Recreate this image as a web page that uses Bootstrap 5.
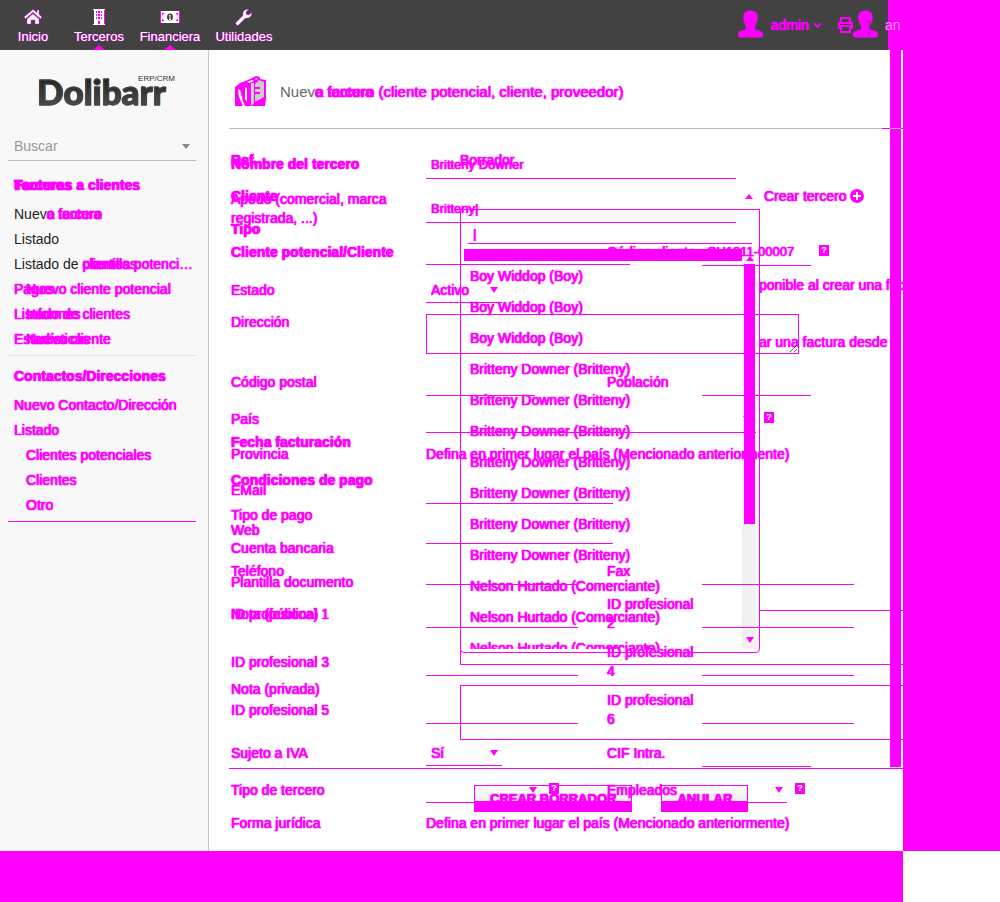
<!DOCTYPE html>
<html lang="es">
<head>
<meta charset="utf-8">
<meta name="viewport" content="width=device-width, initial-scale=1">
<title>Dolibarr - comparación de pantallas</title>
<link href="https://cdn.jsdelivr.net/npm/bootstrap@5.3.0/dist/css/bootstrap.min.css" rel="stylesheet">
<style>
:root{--diff:#f0f}
body{font-family:"Liberation Sans",Arial,sans-serif;font-size:14px;line-height:20px;color:#222;background:#fff}
.bg-diff{background:var(--diff)}
.diff,.diff a,.diff input,.diff select,.diff textarea,.diff button{color:var(--diff);text-shadow:0 0 1px var(--diff),0 0 1px var(--diff),0 0 1px var(--diff)}
.diff .same{color:#222;text-shadow:none}
.diff .same-title{color:#666;text-shadow:none}
a{text-decoration:none;color:inherit}
.shrink-ok{min-width:0}
.edge-r{flex:0 0 97px}
.edge-b{height:51px}
.overlay-stack{display:grid}
.overlay-stack>*{grid-area:1/1}
span.overlay-stack{display:inline-grid}
.topbar{height:50px;background:linear-gradient(var(--diff),var(--diff)) right/15px 100% no-repeat #424242}
.menu-item{font-size:13px;line-height:16px;color:#fff;text-shadow:0 0 1px var(--diff),0 0 1px var(--diff);padding-top:8px;width:66px}
.menu-item:nth-child(3){width:76px}
.menu-item:nth-child(4){width:72px}
.menu-item svg{display:block;margin:0 auto 3px}
.menu-item.on::after{content:"";border:6px solid transparent;border-top:0;border-bottom:5px solid var(--diff);position:absolute;bottom:0;left:50%;margin-left:-6px}
.user-cut{width:18px;overflow:hidden;margin-left:7px}
.diff .user-cut a{color:#f8f}
.side{flex:0 0 209px;background:#f8f8f8;border-right:1px solid #c8c8c8;padding:20px 12px 0 8px}
.brand{height:50px;padding-left:29px}
.brand-name{font:900 35px/42px Lato,sans-serif;background:linear-gradient(#222 20%,#555);-webkit-background-clip:text;background-clip:text;color:transparent;-webkit-text-stroke:1px #444}
.brand-tag{font-size:8px;line-height:10px;right:21px;top:4px;color:#333}
.search{height:26px;margin-top:15px;border-bottom:1px solid #c0c0c0;padding:0 6px 3px}
.search select,.plain{appearance:none;border:0;background:none;padding:0;border-radius:0;outline:0}
.search select{color:#999}
.caret{width:0;height:0;border:4px solid transparent;border-bottom:0;border-top:5px solid #888;flex:none}
.caret-s{border-top:6px solid var(--diff)}
.caret-up{width:0;height:0;border:4px solid transparent;border-top:0;border-bottom:5px solid var(--diff);flex:none}
.menu-block{padding:12px 0 3px 6px}
.menu-block.second{padding-top:8px;border-bottom:1px solid var(--diff)}
.menu-block li{height:25px;line-height:25px;white-space:nowrap}
.menu-block li:first-child{font-weight:bold;margin-bottom:4px}
.menu-block .sub{padding-left:12px}
.content-pane{padding-left:20px}
.title-row{height:78px;padding:6px 0 0 5px;font-size:15px}
.title-text{padding-left:12px}
.title-rule{height:1px;background:linear-gradient(90deg,#bbb calc(100% - 21px),var(--diff) calc(100% - 21px),var(--diff) calc(100% - 13px),#bbb calc(100% - 13px),#bbb calc(100% - 2px),var(--diff) calc(100% - 2px))}
.scroll-strip{right:2px;top:0;width:11px;height:717px}
.forms{padding-top:16px;overflow:hidden}
.form-a,.form-b{display:grid;align-items:center;align-content:start;padding-left:2px}
.form-a{grid-template-columns:195px 181px 95px 1fr;grid-template-rows:39px 49px 38px 38px 53px 40px 34px 36px 36px 44px 38px 48px 48px 48px 38px 36px 30px;z-index:2}
.form-b{grid-template-columns:229px 1fr;grid-template-rows:30px 42px 24px 88px 26px 70px 34px 42px 28px 38px 30px 75px 75px}
.c1{grid-column:1;line-height:19px;padding-right:8px}
.c2{grid-column:2;white-space:nowrap}
.c3{grid-column:3;line-height:19px}
.c4{grid-column:4}
.line{border:0;border-bottom:1px solid var(--diff);border-radius:0;background:none;padding:0 5px;height:28px;outline:0}
input.line{font-size:13px}
.pick{height:26px;padding-right:4px;appearance:none}
.pick select{flex:1;min-width:0}
.w-a{width:76px}.w-b{width:109px}.w-c{width:115px}.w-d{width:152px}.w-e{width:187px}.w-f{width:204px}.w-g{width:310px}.w-h{width:330px}.w-i{width:85px}
.area-box{border:1px solid var(--diff);background:none;border-radius:0;display:block;outline:0}
.area-a{width:373px;height:40px;margin-top:5px;align-self:start}
.area-b{width:100%;height:55px;margin-top:13px;align-self:start;border-right:0;resize:none}
.area-label{align-self:start;padding-top:7px}
.area-label-a{align-self:start;padding-top:4px}
.hint{width:10px;height:11px;font:bold 9px/11px "Liberation Sans",sans-serif;text-align:center;flex:none;background:var(--diff);margin-bottom:4px}
.diff .hint{color:#fff;text-shadow:none}
.opt{margin-left:299px;white-space:nowrap}
.create{padding-left:285px;gap:11px}
.picker{left:231px;top:64px;width:300px;height:444px;border:1px solid var(--diff);border-radius:0 0 4px 4px;background:#fff;padding:13px 3px 3px;z-index:1}
.picker .find{height:21px;width:284px;margin:0 4px;display:block}
.picker .hl{height:12px;width:278px;margin-top:5px}
.picker ul{height:388px;overflow:hidden;margin:0;padding:0 0 0 6px;list-style:none}
.picker li{height:31px;line-height:31px}
.picker .rail{right:3px;top:39px;width:14px;height:400px;background:#f1f1f1;padding:7px 1px 6px 2px}
.picker .thumb{width:11px;height:260px;margin-top:3px}
.actions{border-top:1px solid var(--diff);padding:16px 0 0 245px;gap:29px;margin-top:21px}
.act{font-size:13px;font-weight:bold;line-height:25px;height:27px;padding:0 15px;border:1px solid var(--diff);border-radius:0;background:linear-gradient(#fff,#eee 15px,var(--diff) 15px)}
</style>
</head>
<body>
<div class="d-flex flex-column min-vh-100">
 <div class="d-flex flex-grow-1">
  <div class="flex-grow-1 d-flex flex-column shrink-ok">
   <nav class="topbar d-flex">
    <a href="#" class="menu-item text-center"><svg width="18" height="18" viewBox="0 0 18 18"><path fill="#fff" stroke="#f0f" stroke-width=".5" d="M9 1.500 0 9l1.500 1.700L9 4.300l7.500 6.400L18 9l-3-2.500V2h-2v2.800zM9 5.800 3 11v5h4v-4h4v4h4v-5z"/></svg>Inicio</a>
    <a href="#" class="menu-item text-center on position-relative"><svg width="18" height="18" viewBox="0 0 18 18"><path fill="#fff" d="M3 1h12v1h-1v14h1v1H3v-1h1V2H3z"/><path fill="#f0f" d="M6 3h1v2H6zm2 0h2v2H8zm3 0h1v2h-1zM6 6h1v2H6zm2 0h2v2H8zm3 0h1v2h-1zM6 9h1v2H6zm2 0h2v2H8zm3 0h1v2h-1zm-3 4h2v3H8zM14 2h1v14h-1z"/></svg>Terceros</a>
    <a href="#" class="menu-item text-center on position-relative"><svg width="20" height="18" viewBox="0 0 20 18"><path fill="#fff" d="M0 3h20v12H0z"/><path fill="#f0f" d="M0 3h1v12H0zm19 0h1v12h-1zM2 5h2v1H3v1H2zm14 0h2v2h-1V6h-1zM2 11h1v1h1v1H2zm15 0h1v2h-2v-1h1z"/><ellipse cx="10" cy="9" rx="3" ry="3.500" fill="#424242"/><path fill="#fff" d="M9 7h1.500v4h.5v1H9v-1h.500V8H9z"/></svg>Financiera</a>
    <a href="#" class="menu-item text-center"><svg width="18" height="18" viewBox="0 0 18 18"><path fill="#fff" stroke="#f0f" stroke-width=".5" d="m1 14.500 7-7C7.300 4 9.500 1 13.500 1.300L11 4l.5 2.500L14 7l2.700-2.500C17 8.500 14 10.700 10.500 10l-7 7C2 18 0 16 1 14.500z"/></svg>Utilidades</a>
    <div class="ms-auto d-flex align-items-center diff">
     <svg width="25" height="30" viewBox="0 0 26 30"><path id="person" fill="#f0f" d="M13 0c5 0 8 3 7.500 8-.3 5-2.500 6-3 11 0 2 8.500 1 8.500 6 0 3-1 3-3 3H3c-2 0-3 0-3-3 0-5 8.500-4 8.500-6-.5-5-2.700-6-3-11C5 3 8 0 13 0z"/></svg>
     <a href="#" class="ps-2">admin</a>
     <svg class="ms-1 me-3" width="9" height="8" viewBox="0 0 10 8"><path d="m1 2 4 4 4-4" fill="none" stroke="#f0f" stroke-width="2"/></svg>
     <svg width="15" height="16" viewBox="0 0 15 16"><path d="M3 6V1h8l1 1v4M3 11H1V6h13v5h-2M3 9h9v6H3z" fill="none" stroke="#f0f" stroke-width="2"/></svg>
     <svg width="25" height="30" viewBox="0 0 26 30"><use href="#person"/><path d="M14 12c3-3 6 0 3 3v3M17 23v2" fill="none" stroke="#424242"/></svg>
     <span class="user-cut"><a href="#">an</a></span>
    </div>
   </nav>
   <div class="d-flex flex-grow-1">
    <aside class="side">
     <div class="brand position-relative"><span class="brand-name">Dolibarr</span><span class="brand-tag position-absolute">ERP/CRM</span></div>
     <div class="search d-flex align-items-center justify-content-between"><select aria-label="Buscar" class="w-100"><option>Buscar</option></select><i class="caret"></i></div>
     <ul class="menu-block list-unstyled mb-0 border-bottom diff">
      <li><span class="overlay-stack"><span>Terceros</span><span>Facturas a clientes</span></span></li>
      <li><a href="#"><span class="same">Nuev</span><span class="overlay-stack"><span>o tercero</span><span>a factura</span></span></a></li>
      <li><a href="#"><span class="same">Listado</span></a></li>
      <li><a href="#"><span class="same">Listado de </span><span class="overlay-stack"><span>clientes potenci…</span><span>plantillas</span></span></a></li>
      <li class="overlay-stack"><a href="#" class="sub">Nuevo cliente potencial</a><a href="#">Pagos</a></li>
      <li class="overlay-stack"><a href="#">Listado de clientes</a><a href="#" class="sub">Informes</a></li>
      <li class="overlay-stack"><a href="#" class="sub">Nuevo cliente</a><a href="#">Estadísticas</a></li>
     </ul>
     <ul class="menu-block second list-unstyled mb-0 diff">
      <li>Contactos/Direcciones</li>
      <li><a href="#">Nuevo Contacto/Dirección</a></li>
      <li><a href="#">Listado</a></li>
      <li class="sub"><a href="#">Clientes potenciales</a></li>
      <li class="sub"><a href="#">Clientes</a></li>
      <li class="sub"><a href="#">Otro</a></li>
     </ul>
    </aside>
    <main class="content-pane flex-grow-1 position-relative diff shrink-ok">
     <div class="scroll-strip bg-diff position-absolute"></div>
     <div class="title-row d-flex align-items-center">
      <svg width="34" height="34" viewBox="0 0 34 34"><path fill="#f0f" d="M1 12 6 8l8-3 8-4 4 1v2l6 1v18l-1 8H1z"/><path fill="#ccc" d="M17 8h3v20l-3 3zm8-3 5 2v15l-9 5v-8h5v-2h-5v-3h5v-2h-5V9z"/><path fill="#fff" d="m4 14 2 1 3 11 2 5H9L5 22zm7-2 2 1v14l-2-3zm2-5 5-2 2 1-5 2zm9-4 2 1-3 1z"/></svg>
      <span class="same-title title-text">Nuev</span><span class="overlay-stack"><span>o tercero (cliente potencial, cliente, proveedor)</span><span>a factura</span></span>
     </div>
     <div class="title-rule position-relative"></div>
     <div class="forms overlay-stack position-relative">
      <form>
       <div class="form-b">
        <b class="c1">Ref.</b><span>Borrador</span>
        <b class="c1">Cliente</b><span class="d-flex align-items-center create"><i class="caret-up"></i><a href="#" class="d-flex align-items-center gap-1">Crear tercero<svg width="14" height="14" viewBox="0 0 14 14"><circle cx="7" cy="7" r="7" fill="#f0f"/><path d="M7 3v8M3 7h8" stroke="#fff" stroke-width="2"/></svg></a></span>
        <b class="c1">Tipo</b><span></span>
        <span class="c2 opt">ponible al crear una fact</span>
        <span class="c2 opt">ar una factura desde l</span>
        <span class="c2"></span>
        <b class="c1">Fecha facturación</b><span></span>
        <b class="c1">Condiciones de pago</b><span></span>
        <span class="c1">Tipo de pago</span><span></span>
        <span class="c1">Cuenta bancaria</span><span></span>
        <span class="c1">Plantilla documento</span><span></span>
        <label for="np" class="area-label">Nota (pública)</label><textarea id="np" class="area-box area-b"></textarea>
        <label for="nv" class="area-label">Nota (privada)</label><textarea id="nv" class="area-box area-b"></textarea>
       </div>
       <div class="actions d-flex">
        <button type="button" class="act">CREAR BORRADOR</button>
        <button type="button" class="act">ANULAR</button>
       </div>
      </form>
      <div class="picker position-absolute">
       <input class="line find" aria-label="Buscar cliente" value="|">
       <div class="hl bg-diff"></div>
       <ul>
        <li>Boy Widdop (Boy)</li><li>Boy Widdop (Boy)</li><li>Boy Widdop (Boy)</li>
        <li>Britteny Downer (Britteny)</li><li>Britteny Downer (Britteny)</li><li>Britteny Downer (Britteny)</li><li>Britteny Downer (Britteny)</li><li>Britteny Downer (Britteny)</li><li>Britteny Downer (Britteny)</li><li>Britteny Downer (Britteny)</li>
        <li>Nelson Hurtado (Comerciante)</li><li>Nelson Hurtado (Comerciante)</li><li>Nelson Hurtado (Comerciante)</li>
       </ul>
       <div class="rail position-absolute d-flex flex-column justify-content-between align-items-center"><div><i class="caret-up d-block mx-auto"></i><div class="thumb bg-diff"></div></div><i class="caret caret-s"></i></div>
      </div>
      <form class="form-a">
       <label class="c1 fw-bold" for="nom">Nombre del tercero</label><input id="nom" class="c2 line w-g" value="Britteny Downer">
       <label class="c1" for="apo">Apodo (comercial, marca registrada, ...)</label><input id="apo" class="c2 line w-g" value="Britteny|">
       <label class="c1 fw-bold" for="cp">Cliente potencial/Cliente</label><select id="cp" class="c2 line pick w-f"><option></option></select>
       <label class="c3 text-nowrap" for="cod">Código cliente</label><span class="c4 d-flex align-items-center"><input id="cod" class="line w-b" value="CU1811-00007"><i class="hint ms-2">?</i></span>
       <label class="c1" for="est">Estado</label><span class="c2 line pick w-a d-flex align-items-center"><select id="est" class="plain"><option>Activo</option></select><i class="caret caret-s"></i></span>
       <label class="c1 area-label-a" for="dir">Dirección</label><textarea id="dir" class="c2 area-box area-a"></textarea>
       <label class="c1" for="zip">Código postal</label><input id="zip" class="c2 line w-b"><label class="c3" for="pob">Población</label><input id="pob" class="c4 line w-b">
       <label class="c1" for="pais">País</label><span class="c2 d-flex align-items-center gap-2"><span class="line w-h d-flex align-items-center flex-shrink-0"><select id="pais" class="plain flex-grow-1"><option></option></select><i class="caret caret-s"></i></span><i class="hint">?</i></span>
       <span class="c1">Provincia</span><span class="c2">Defina en primer lugar el país (Mencionado anteriormente)</span>
       <label class="c1" for="em">EMail</label><input id="em" class="c2 line w-e">
       <label class="c1" for="web">Web</label><input id="web" class="c2 line w-e">
       <label class="c1" for="tel">Teléfono</label><input id="tel" class="c2 line w-d"><label class="c3" for="fax">Fax</label><input id="fax" class="c4 line w-d">
       <label class="c1" for="p1">ID profesional 1</label><input id="p1" class="c2 line w-d"><label class="c3" for="p2">ID profesional 2</label><input id="p2" class="c4 line w-d">
       <label class="c1" for="p3">ID profesional 3</label><input id="p3" class="c2 line w-d"><label class="c3" for="p4">ID profesional 4</label><input id="p4" class="c4 line w-d">
       <label class="c1" for="p5">ID profesional 5</label><input id="p5" class="c2 line w-d"><label class="c3" for="p6">ID profesional 6</label><input id="p6" class="c4 line w-d">
       <label class="c1" for="iva">Sujeto a IVA</label><span class="c2 line pick w-a d-flex align-items-center"><select id="iva" class="plain"><option>Sí</option></select><i class="caret caret-s"></i></span><label class="c3" for="cif">CIF Intra.</label><input id="cif" class="c4 line w-b">
       <label class="c1" for="tip">Tipo de tercero</label><span class="c2 d-flex align-items-center gap-2"><span class="line pick w-c d-flex align-items-center"><select id="tip" class="plain"><option></option></select><i class="caret caret-s"></i></span><i class="hint">?</i></span><label class="c3" for="emp">Empleados</label><span class="c4 d-flex align-items-center gap-2"><span class="line pick w-i d-flex align-items-center"><select id="emp" class="plain"><option></option></select><i class="caret caret-s"></i></span><i class="hint">?</i></span>
       <span class="c1">Forma jurídica</span><span class="c2">Defina en primer lugar el país (Mencionado anteriormente)</span>
      </form>
     </div>
    </main>
   </div>
  </div>
  <div class="edge-r bg-diff"></div>
 </div>
 <div class="d-flex"><div class="edge-b bg-diff flex-grow-1"></div><div class="edge-r"></div></div>
</div>
<script src="https://cdn.jsdelivr.net/npm/bootstrap@5.3.0/dist/js/bootstrap.bundle.min.js"></script>
</body>
</html>
